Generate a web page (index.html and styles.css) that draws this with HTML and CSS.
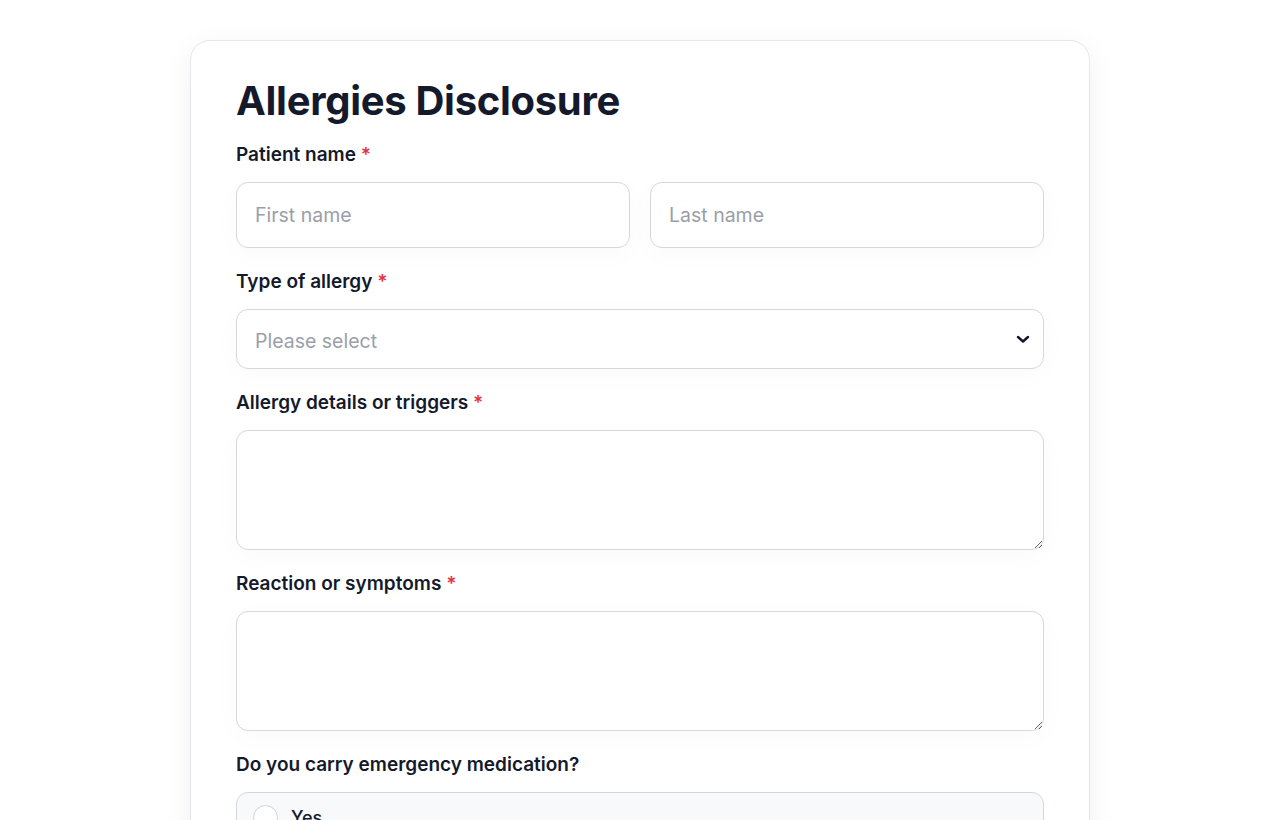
FILE: index.html
```html
<!DOCTYPE html>
<html lang="en">
<head>
<meta charset="utf-8">
<title>Allergies Disclosure</title>
<link rel="stylesheet" href="styles.css">
</head>
<body>
<main class="page">
  <form class="card">
    <h1 class="title">Allergies Disclosure</h1>

    <div class="group">
      <label class="label">Patient name <span class="req">*</span></label>
      <div class="row">
        <input class="field" type="text" placeholder="First name">
        <input class="field" type="text" placeholder="Last name">
      </div>
    </div>

    <div class="group">
      <label class="label">Type of allergy <span class="req">*</span></label>
      <div class="select">
        <span class="select-text">Please select</span>
        <svg class="chev" width="14" height="10" viewBox="0 0 14 10" aria-hidden="true"><path d="M2 3l5 4.5L12 3" fill="none" stroke="#111827" stroke-width="2.4" stroke-linecap="round" stroke-linejoin="round"/></svg>
      </div>
    </div>

    <div class="group">
      <label class="label">Allergy details or triggers <span class="req">*</span></label>
      <textarea class="area"></textarea>
    </div>

    <div class="group">
      <label class="label">Reaction or symptoms <span class="req">*</span></label>
      <textarea class="area"></textarea>
    </div>

    <div class="group">
      <label class="label">Do you carry emergency medication?</label>
      <div class="option">
        <span class="radio"></span>
        <span class="opt-text">Yes</span>
      </div>
      <div class="option">
        <span class="radio"></span>
        <span class="opt-text">No</span>
      </div>
    </div>
  </form>
</main>
</body>
</html>
```

FILE: styles.css
```css
* { box-sizing: border-box; }
html, body { margin: 0; padding: 0; background: #ffffff; }
body {
  font-family: Inter, "Noto Sans", sans-serif;
  color: #141a2b;
}
.page {
  display: flex;
  justify-content: center;
  padding-top: 40px;
}
.card {
  width: 900px;
  border: 1px solid #e5e7eb;
  border-radius: 20px;
  background: #fff;
  padding: 30px 45px 45px;
  box-shadow: 0 8px 30px rgba(17, 24, 39, 0.06);
}
.title {
  margin: 0;
  font-size: 40px;
  line-height: 60px;
  font-weight: 700;
  letter-spacing: -0.3px;
  color: #141a2b;
}
.group { margin-top: 20px; display: flex; flex-direction: column; }
.group:first-of-type { margin-top: 10px; }
.label {
  display: block;
  font-size: 19px;
  line-height: 27px;
  font-weight: 600;
  margin-bottom: 14px;
  color: #141a2b;
}
.req { color: #e3343f; }
.row { display: flex; gap: 20px; }
.field {
  flex: 1;
  min-width: 0;
  height: 66px;
  border: 1px solid #d4d7de;
  border-radius: 12px;
  padding: 0 18px;
  font-family: inherit;
  font-size: 19.5px;
  color: #141a2b;
  background: #fff;
  box-shadow: 0 6px 28px rgba(17, 24, 39, 0.025);
  outline: none;
}
.field::placeholder { color: #9a9ea8; }
.select {
  height: 60px;
  border: 1px solid #d4d7de;
  border-radius: 12px;
  padding: 4px 13px 0 18px;
  display: flex;
  align-items: center;
  justify-content: space-between;
  box-shadow: 0 6px 28px rgba(17, 24, 39, 0.025);
}
.select-text { font-size: 19.5px; color: #9a9ea8; }
.chev { display: block; margin-top: -4px; }
.area {
  height: 120px;
  border: 1px solid #d4d7de;
  border-radius: 12px;
  padding: 14px 18px;
  font-family: inherit;
  font-size: 18px;
  resize: vertical;
  box-shadow: 0 6px 28px rgba(17, 24, 39, 0.025);
  outline: none;
  display: block;
  width: 100%;
}
.option {
  display: flex;
  align-items: center;
  gap: 13px;
  border: 1px solid #d4d7de;
  border-radius: 12px;
  background: #f8f9fb;
  padding: 12px 16px;
  margin-bottom: 12px;
}
.radio {
  flex: none;
  width: 25px;
  height: 25px;
  border: 1px solid #cfd3da;
  border-radius: 50%;
  background: #fff;
}
.opt-text { font-size: 18px; line-height: 25px; font-weight: 500; color: #141a2b; }
```
